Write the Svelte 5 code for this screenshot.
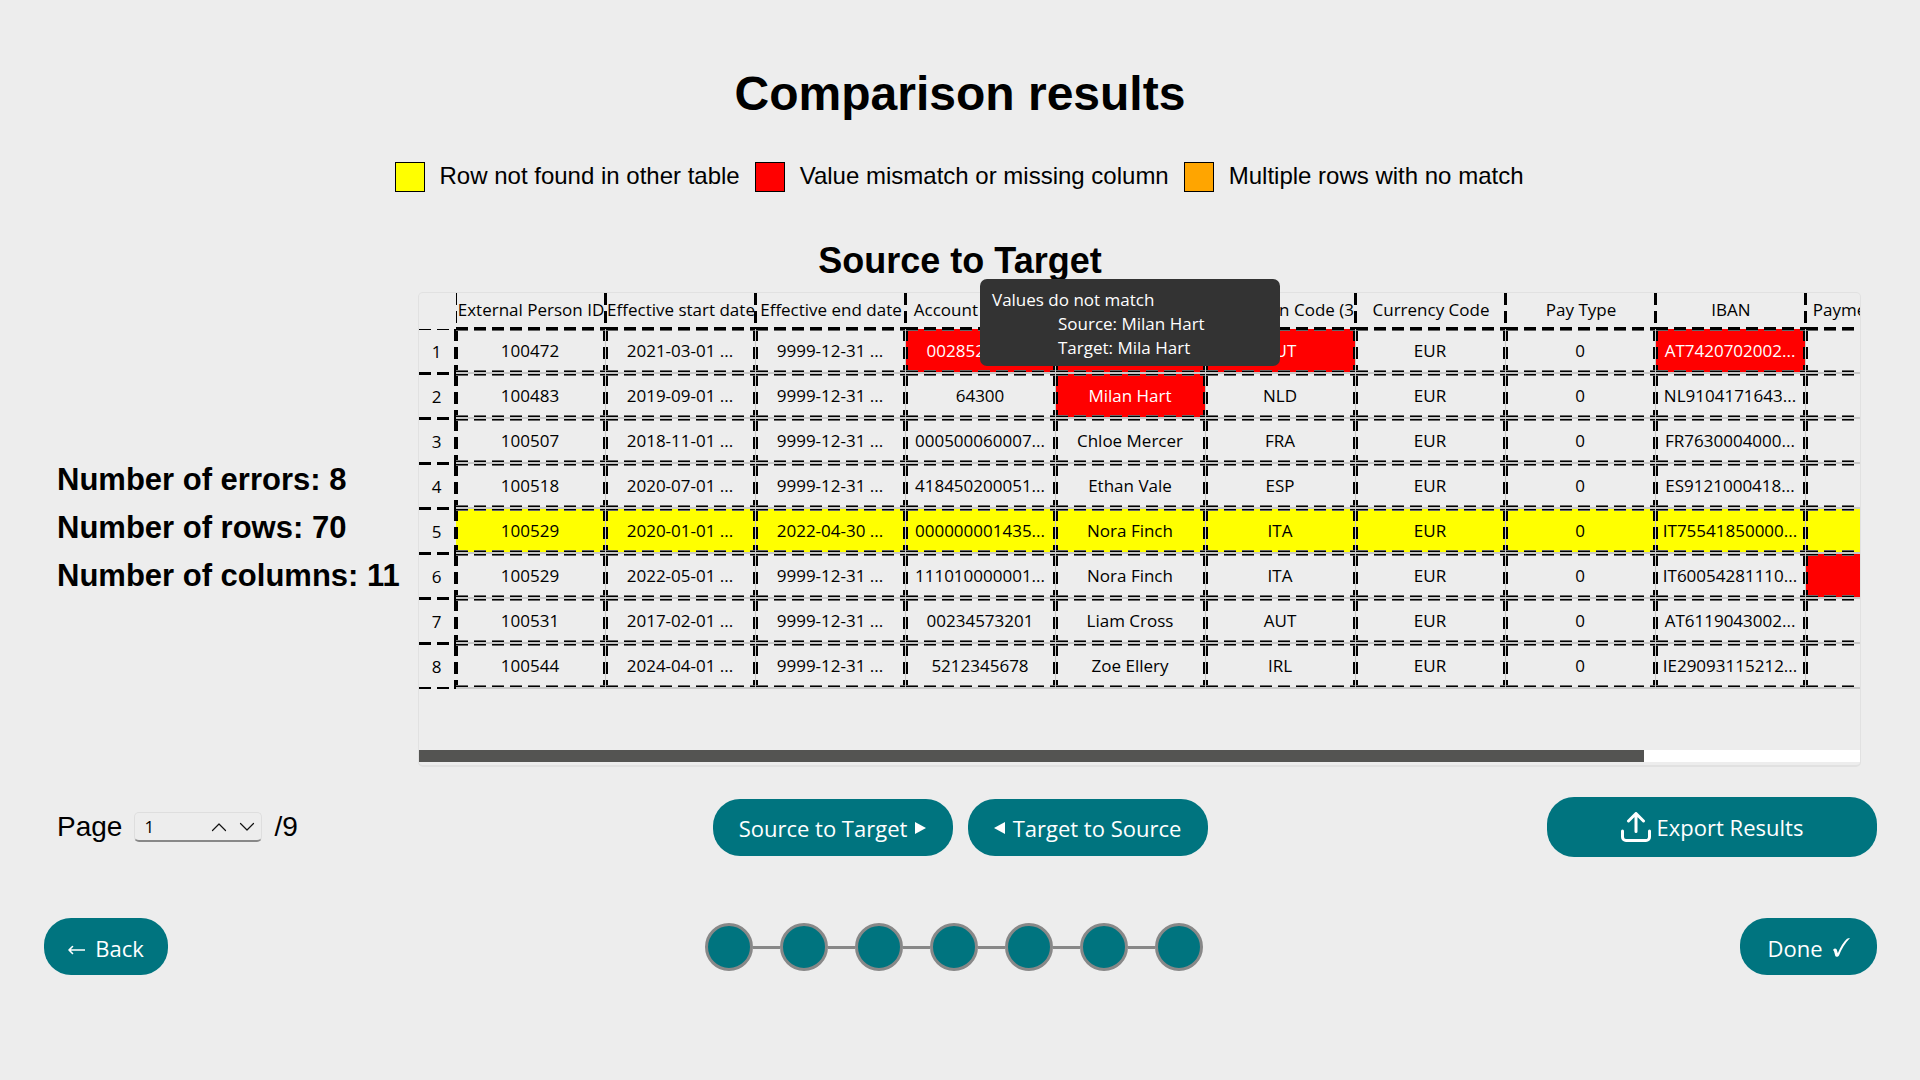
<script>
  const legend = [
    { tone: 'yellow', label: 'Row not found in other table' },
    { tone: 'red', label: 'Value mismatch or missing column' },
    { tone: 'orange', label: 'Multiple rows with no match' }
  ];

  const stats = [
    { label: 'Number of errors', value: 8 },
    { label: 'Number of rows', value: 70 },
    { label: 'Number of columns', value: 11 }
  ];

  const columns = [
    'External Person ID',
    'Effective start date',
    'Effective end date',
    'Account Number',
    'Account Name',
    'Region Code (3',
    'Currency Code',
    'Pay Type',
    'IBAN',
    'Payment Method',
    ''
  ];

  const rows = [
    { cells: ['100472', '2021-03-01 ...', '9999-12-31 ...', '00285240021', '', 'AUT', 'EUR', '0', 'AT7420702002...', '', ''], red: [3, 4, 5, 8] },
    { cells: ['100483', '2019-09-01 ...', '9999-12-31 ...', '64300', 'Milan Hart', 'NLD', 'EUR', '0', 'NL9104171643...', '', ''], red: [4] },
    { cells: ['100507', '2018-11-01 ...', '9999-12-31 ...', '000500060007...', 'Chloe Mercer', 'FRA', 'EUR', '0', 'FR7630004000...', '', ''] },
    { cells: ['100518', '2020-07-01 ...', '9999-12-31 ...', '418450200051...', 'Ethan Vale', 'ESP', 'EUR', '0', 'ES9121000418...', '', ''] },
    { cells: ['100529', '2020-01-01 ...', '2022-04-30 ...', '000000001435...', 'Nora Finch', 'ITA', 'EUR', '0', 'IT75541850000...', '', ''], missing: true },
    { cells: ['100529', '2022-05-01 ...', '9999-12-31 ...', '111010000001...', 'Nora Finch', 'ITA', 'EUR', '0', 'IT60054281110...', '', ''], red: [9] },
    { cells: ['100531', '2017-02-01 ...', '9999-12-31 ...', '00234573201', 'Liam Cross', 'AUT', 'EUR', '0', 'AT6119043002...', '', ''] },
    { cells: ['100544', '2024-04-01 ...', '9999-12-31 ...', '5212345678', 'Zoe Ellery', 'IRL', 'EUR', '0', 'IE29093115212...', '', ''] }
  ];

  const steps = [1, 2, 3, 4, 5, 6, 7];
  let page = $state(1);
</script>

<main class="page">
  <h1>Comparison results</h1>

  <ul class="legend">
    {#each legend as item}
      <li><span class="swatch {item.tone}"></span>{item.label}</li>
    {/each}
  </ul>

  <h2>Source to Target</h2>

  <section class="results">
    <div class="stats">
      {#each stats as stat}
        <p>{stat.label}: {stat.value}</p>
      {/each}
    </div>

    <div class="frame">
      <div class="viewport">
        <table>
          <colgroup>
            <col class="index-col" />
            {#each columns as _}<col class="data-col" />{/each}
          </colgroup>
          <thead>
            <tr>
              <td class="corner"></td>
              {#each columns as column, c}
                <th scope="col" class:clipped={c === 5}>{column}</th>
              {/each}
            </tr>
          </thead>
          <tbody>
            {#each rows as row, r}
              <tr class:missing={row.missing}>
                <th scope="row">{r + 1}</th>
                {#each row.cells as cell, c}
                  <td class:mismatch={row.red?.includes(c)}>{cell}</td>
                {/each}
              </tr>
            {/each}
          </tbody>
        </table>
      </div>
      <div class="scroll-track"><div class="scroll-thumb"></div></div>
      <div class="tooltip" role="tooltip">
        <p>Values do not match</p>
        <p class="detail">Source: Milan Hart</p>
        <p class="detail">Target: Mila Hart</p>
      </div>
    </div>
  </section>

  <section class="actions">
    <div class="pager">
      <label for="page-number">Page</label>
      <div class="spin">
        <input id="page-number" type="text" inputmode="numeric" bind:value={page} />
        <button type="button" aria-label="Next page" onclick={() => (page = Math.min(9, Number(page) + 1))}>
          <svg width="16" height="10" viewBox="0 0 16 10"><path d="M1.500 8.500 8 2l6.500 6.500" /></svg>
        </button>
        <button type="button" aria-label="Previous page" onclick={() => (page = Math.max(1, Number(page) - 1))}>
          <svg width="16" height="10" viewBox="0 0 16 10"><path d="M1.500 1.500 8 8l6.500-6.500" /></svg>
        </button>
      </div>
      <span>/9</span>
    </div>
    <div class="direction">
      <button class="pill" type="button">
        Source to Target
        <svg width="11" height="12" viewBox="0 0 11 12"><path class="solid" d="M0 0 11 6 0 12z" /></svg>
      </button>
      <button class="pill" type="button">
        <svg width="11" height="12" viewBox="0 0 11 12"><path class="solid" d="M11 0 0 6l11 6z" /></svg>
        Target to Source
      </button>
    </div>
    <button class="pill export" type="button">
      <svg width="30" height="30" viewBox="0 0 30 30">
        <path d="M1.500 19v6a3.500 3.500 0 0 0 3.500 3.500h20a3.500 3.500 0 0 0 3.500-3.500v-6M15 19.500V2M7.500 9 15 1.500 22.500 9" />
      </svg>
      Export Results
    </button>
  </section>

  <nav class="wizard" aria-label="Wizard steps">
    <button class="pill back" type="button">
      <svg width="17" height="14" viewBox="0 0 17 14"><path class="thin" d="M16.500 9H1M4.500 5.500 1 9l3.500 3.500" /></svg>
      Back
    </button>
    <ol class="steps">
      {#each steps as step}
        <li aria-label="Step {step}"></li>
      {/each}
    </ol>
    <button class="pill done" type="button">
      Done
      <svg width="17" height="19" viewBox="0 0 17 19"><path class="solid" d="M0 12c1.500-2 3.500-2 4.200 1l.6 2.200C7.500 9 10.500 4 14 .800c1-.7 2-.8 3-.8C12 5 8.500 11 6 17.500c-.8 1.500-3.200 1.800-3.700.5C1.600 16 1.500 13 0 12z" /></svg>
    </button>
  </nav>
</main>

<style>
  :global(body) {
    margin: 0;
    background: #ededed;
  }

  .page {
    --ui: 'Open Sans', 'Noto Sans', sans-serif;
    --teal: #00747f;
    --dash-x: repeating-linear-gradient(90deg, #000 0 12px, transparent 12px 18px);
    --dash-y: repeating-linear-gradient(180deg, #000 0 12px, transparent 12px 18px);
    --soft-x: repeating-linear-gradient(90deg, #666 0 12px, transparent 12px 18px);
    --grid: linear-gradient(#c8c8c8, #c8c8c8);
    box-sizing: border-box;
    min-height: 100vh;
    padding: 65px 43px 0;
    font-family: 'Liberation Sans', Arial, sans-serif;
    color: #000;
  }

  h1, h2, p, ul, ol {
    margin: 0;
    padding: 0;
    list-style: none;
  }

  h1 {
    font-size: 48px;
    line-height: 58px;
    text-align: center;
  }

  .legend {
    display: flex;
    justify-content: center;
    gap: 15px;
    margin-top: 39px;
    padding-right: 2px;
    font-size: 24px;
    line-height: 28px;
  }

  .legend li {
    display: flex;
    gap: 15px;
  }

  .swatch {
    box-sizing: border-box;
    width: 30px;
    height: 30px;
    border: 1px solid #000;
  }

  .yellow { background: #ff0; }
  .red { background: #f00; }
  .orange { background: #ffa500; }

  h2 {
    margin-top: 49px;
    font-size: 36px;
    line-height: 40px;
    text-align: center;
  }

  .results {
    display: flex;
    align-items: center;
    gap: 15px;
    margin-top: 11px;
    padding: 0 16px 0 14px;
  }

  .stats {
    flex: none;
    width: 346px;
    padding-bottom: 4px;
    font-size: 31px;
    font-weight: 700;
    line-height: 48px;
    white-space: nowrap;
  }

  .frame {
    position: relative;
    flex: 1;
    min-width: 0;
    padding-bottom: 3px;
    border: 1px solid #e1e1e1;
    border-bottom-width: 2px;
    border-radius: 5px;
  }

  .viewport {
    overflow: hidden;
    padding-bottom: 61px;
    border-radius: 4px 4px 0 0;
  }

  table {
    width: 1687px;
    table-layout: fixed;
    border-collapse: collapse;
    font: 17px/24px var(--ui);
    text-align: center;
    white-space: nowrap;
  }

  .index-col { width: 37px; }
  .data-col { width: 150px; }

  th, td {
    box-sizing: border-box;
    padding: 0;
    overflow: hidden;
    font-weight: 400;
    background-repeat: no-repeat;
  }

  thead tr { height: 36px; }
  tbody tr { height: 45px; }

  thead th {
    padding-bottom: 2px;
    background-image: var(--dash-y), var(--dash-y), var(--dash-x);
    background-size: 1px 30px, 2px 30px, 100% 2px;
    background-position: left top, right top, left bottom;
  }

  thead .clipped {
    padding-right: 2px;
    text-align: right;
  }

  tbody th {
    padding-right: 2px;
    background-image: var(--dash-x), var(--dash-x), var(--dash-y);
    background-size: 30px 1px, 30px 2px, 2px 100%;
    background-position: left top, left bottom, right top;
  }

  tbody td {
    padding: 0 2px 2px 0;
    background-image: var(--grid), var(--grid), var(--dash-x), var(--soft-x), var(--dash-x), var(--soft-x), var(--dash-y), var(--dash-y);
    background-size: 100% 2px, 1px 100%, 100% 1px, 100% 1px, 100% 1px, 100% 1px, 2px 43px, 2px 43px;
    background-position: left bottom, right top, left top, left 0 top 1px, left 0 bottom 2px, left 0 bottom 3px, left top, right 1px top 0;
  }

  .missing td { background-color: #ff0; }

  .mismatch {
    background-color: #f00;
    color: #fff;
  }

  .scroll-track {
    height: 12px;
    background: #fff;
  }

  .scroll-thumb {
    width: 85%;
    height: 100%;
    background: #545452;
  }

  .tooltip {
    position: absolute;
    top: -14px;
    left: 561px;
    box-sizing: border-box;
    width: 300px;
    padding: 9px 12px 6px;
    border-radius: 7px;
    background: #333;
    color: #fff;
    font: 17px/24px var(--ui);
  }

  .detail { padding-left: 66px; }

  .actions {
    display: grid;
    grid-template-columns: 1fr auto 1fr;
    align-items: center;
    margin-top: 30px;
  }

  .pager {
    display: flex;
    align-items: center;
    gap: 12px;
    padding-left: 14px;
    font-size: 28px;
    line-height: 34px;
  }

  .spin {
    display: flex;
    align-items: center;
    box-sizing: border-box;
    width: 128px;
    height: 30px;
    border: 1px solid #dedede;
    border-bottom: 2px solid #888;
    border-radius: 5px;
  }

  .spin input {
    flex: 1;
    min-width: 0;
    padding: 0 0 0 9px;
    border: 0;
    background: none;
    font: 17px/24px var(--ui);
  }

  .spin button {
    display: flex;
    justify-content: center;
    width: 28px;
    padding: 0;
    border: 0;
    background: none;
  }

  svg {
    flex: none;
    fill: none;
    stroke: #fff;
    stroke-width: 3;
    stroke-linecap: round;
    stroke-linejoin: round;
  }

  .spin svg {
    stroke: #111;
    stroke-width: 1.2;
  }

  .thin { stroke-width: 1.6; }

  .solid {
    fill: #fff;
    stroke: none;
  }

  .direction {
    display: flex;
    gap: 15px;
  }

  .direction .pill { width: 240px; }

  .pill {
    display: flex;
    align-items: center;
    justify-content: center;
    gap: 8px;
    box-sizing: border-box;
    height: 57px;
    padding: 2px 20px 0;
    border: 0;
    border-radius: 27px;
    background: var(--teal);
    color: #fff;
    font: 22px/32px var(--ui);
    white-space: nowrap;
  }

  .export {
    justify-self: end;
    gap: 6px;
    width: 330px;
    height: 60px;
    padding-top: 0;
  }

  .wizard {
    display: flex;
    align-items: center;
    justify-content: space-between;
    margin-top: 61px;
    padding-left: 1px;
  }

  .back {
    gap: 10px;
    width: 124px;
  }

  .done {
    gap: 10px;
    width: 137px;
  }

  .steps {
    display: flex;
    gap: 27px;
  }

  .steps li {
    position: relative;
    box-sizing: border-box;
    width: 48px;
    height: 48px;
    border: 3px solid #888;
    border-radius: 50%;
    background: var(--teal);
  }

  .steps li + li::before {
    content: '';
    position: absolute;
    top: 20px;
    right: 100%;
    width: 27px;
    height: 3px;
    margin-right: 3px;
    background: #888;
  }
</style>
